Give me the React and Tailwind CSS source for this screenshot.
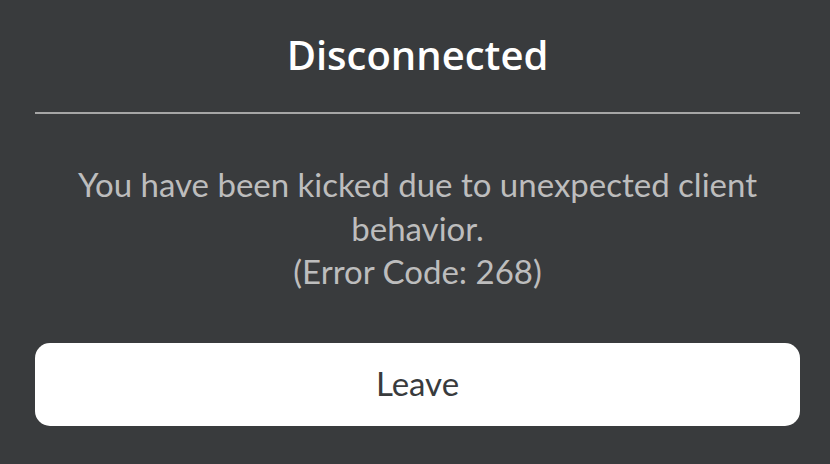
export default function App() {
  return (
    <div className="w-[830px] h-[464px] bg-[#393b3d] flex flex-col pl-[35px] pr-[30px]">
      <div className="h-[112px] flex items-start justify-center pt-[29px]">
        <span className="text-white text-[40px] leading-[52px] font-semibold font-['Open_Sans',sans-serif]">Disconnected</span>
      </div>
      <div className="h-[2px] bg-[#a6a6a6]" />
      <div className="pt-[49px] flex flex-col items-center text-center text-[#bdbdbd] text-[33px] leading-[43.5px] font-['Lato',sans-serif]">
        <p className="w-[700px]">You have been kicked due to unexpected client behavior.</p>
        <p>(Error Code: 268)</p>
      </div>
      <button className="mt-[49px] h-[83px] rounded-[15px] bg-white flex items-center justify-center text-[#393b3d] text-[33px] font-['Lato',sans-serif]">
        Leave
      </button>
    </div>
  );
}
